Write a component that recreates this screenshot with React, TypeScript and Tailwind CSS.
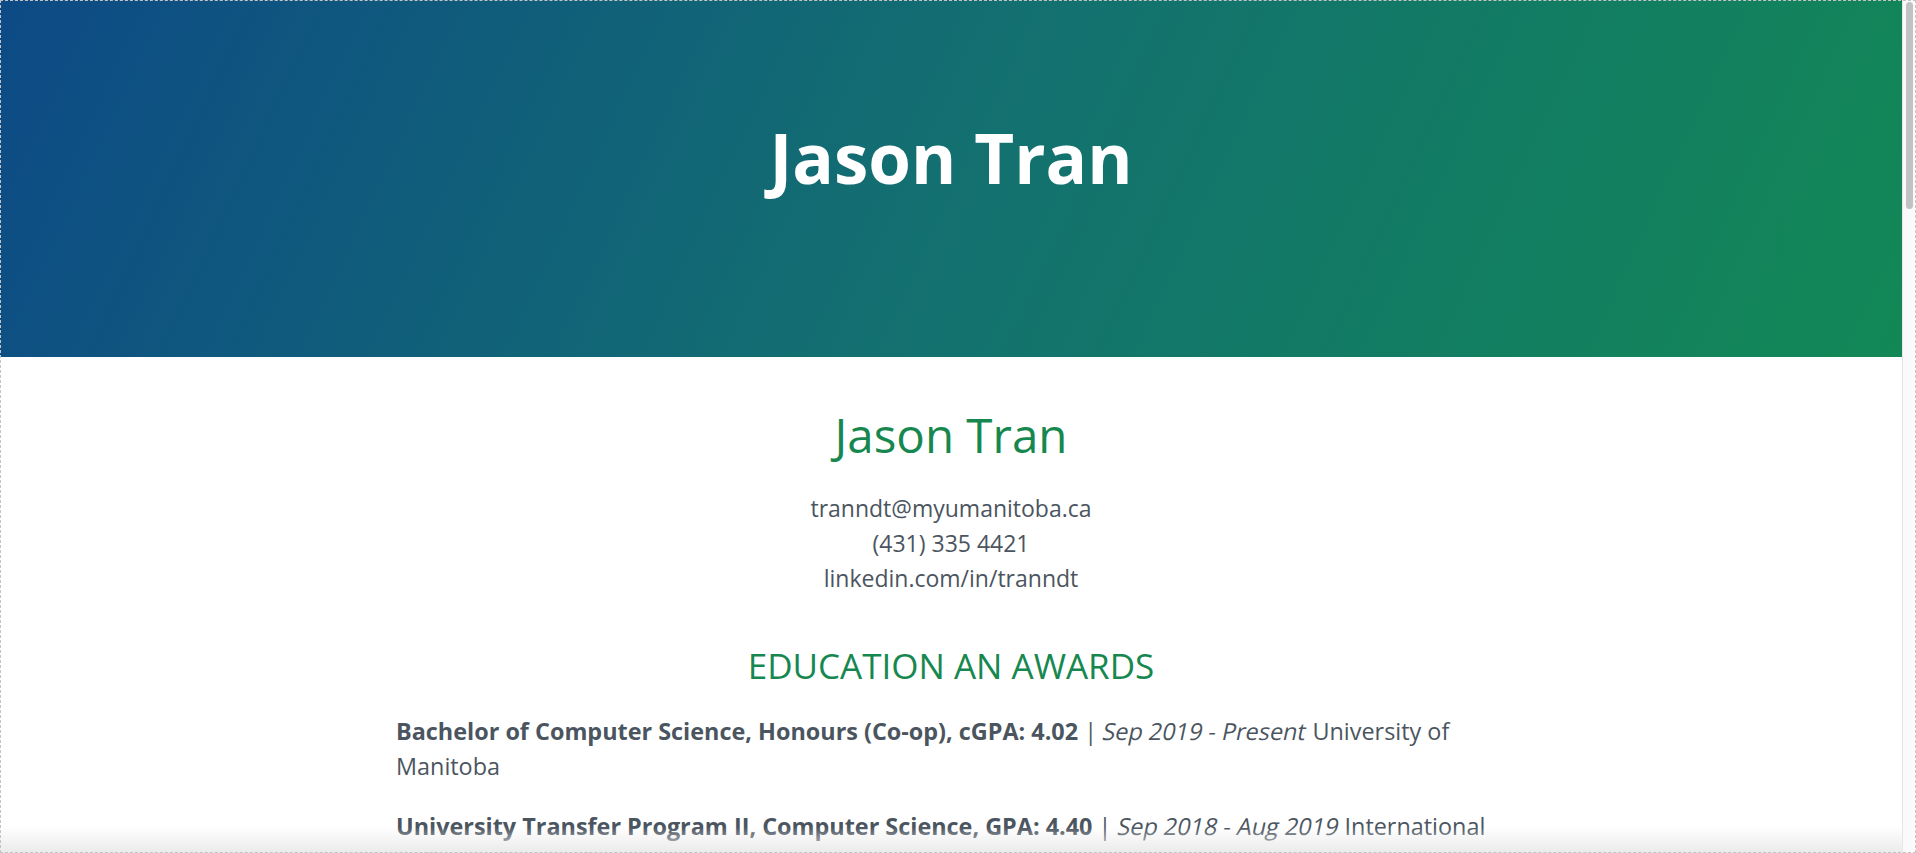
import React from "react";

const Entry = ({ title, date, place }: { title: string; date: string; place: string }) => (
  <p className="mb-[25px] text-[23.4px] leading-[35px]">
    <span className="font-bold">{title}</span> | <span className="inline-block -skew-x-12">{date}</span> {place}
  </p>
);

const Heading = ({ children }: { children: React.ReactNode }) => (
  <h3 className="mt-[52px] mb-[30px] text-center text-[35px] leading-[36px] text-[#16884f]">{children}</h3>
);

export default function App() {
  return (
    <div className="min-h-screen bg-white pr-[14px] font-['Open_Sans',sans-serif] text-[#4b5560]">
      <header className="h-[357px] bg-[linear-gradient(115deg,#0d4a86_0%,#137070_50%,#128856_100%)] pt-[121px] text-center">
        <h1 className="text-[69px] font-bold leading-[72px] text-white">Jason Tran</h1>
      </header>
      <main className="mx-auto max-w-[1140px] px-[15px] pb-[80px]">
        <h2 className="mt-[49px] text-center text-[47.5px] leading-[57.6px] text-[#16884f]">Jason Tran</h2>
        <div className="mt-[27px] text-center text-[23px] leading-[35px]">
          <div>tranndt@myumanitoba.ca</div>
          <div>(431) 335 4421</div>
          <div>linkedin.com/in/tranndt</div>
        </div>
        <Heading>EDUCATION AN AWARDS</Heading>
        <Entry
          title="Bachelor of Computer Science, Honours (Co-op), cGPA: 4.02"
          date="Sep 2019 - Present"
          place="University of Manitoba"
        />
        <Entry
          title="University Transfer Program II, Computer Science, GPA: 4.40"
          date="Sep 2018 - Aug 2019"
          place="International College of Manitoba"
        />
        <Entry title="Dean's Honour List" date="2019 - 2021" place="Faculty of Science, University of Manitoba" />
        <Entry title="Undergraduate Research Award" date="Summer 2021" place="University of Manitoba" />
        <Heading>EXPERIENCE</Heading>
        <Entry title="Software Developer (Co-op)" date="Jan 2021 - Aug 2021" place="Winnipeg, MB" />
        <Entry title="Undergraduate Research Assistant" date="May 2020 - Aug 2020" place="University of Manitoba" />
        <Entry title="Teaching Assistant" date="Sep 2020 - Dec 2020" place="Department of Computer Science" />
        <Heading>PROJECTS</Heading>
        <Entry title="Personal Website" date="2021" place="React, Tailwind CSS" />
        <Entry title="Course Planner" date="2020" place="Python, Flask" />
        <Entry title="Chess Engine" date="2019" place="C++" />
        <Heading>SKILLS</Heading>
        <Entry title="Languages" date="Proficient" place="Python, Java, C, C++, JavaScript, SQL" />
        <Entry title="Tools" date="Familiar" place="Git, Docker, Linux, React, Node.js" />
      </main>
      <div className="pointer-events-none fixed inset-x-0 bottom-0 h-[26px] bg-[linear-gradient(to_bottom,rgba(235,235,235,0)_0%,rgba(232,232,232,0.92)_100%)]" />
      <div className="pointer-events-none fixed right-0 top-0 bottom-0 w-[14px] border-l border-[#e6e6e6] bg-[#fafafa] px-[3px] pt-[2px]">
        <div className="h-[207px] rounded-full bg-[#c2c2c2]" />
      </div>
      <div className="pointer-events-none fixed inset-0 border border-dashed border-[#c4c4c4]" />
    </div>
  );
}
